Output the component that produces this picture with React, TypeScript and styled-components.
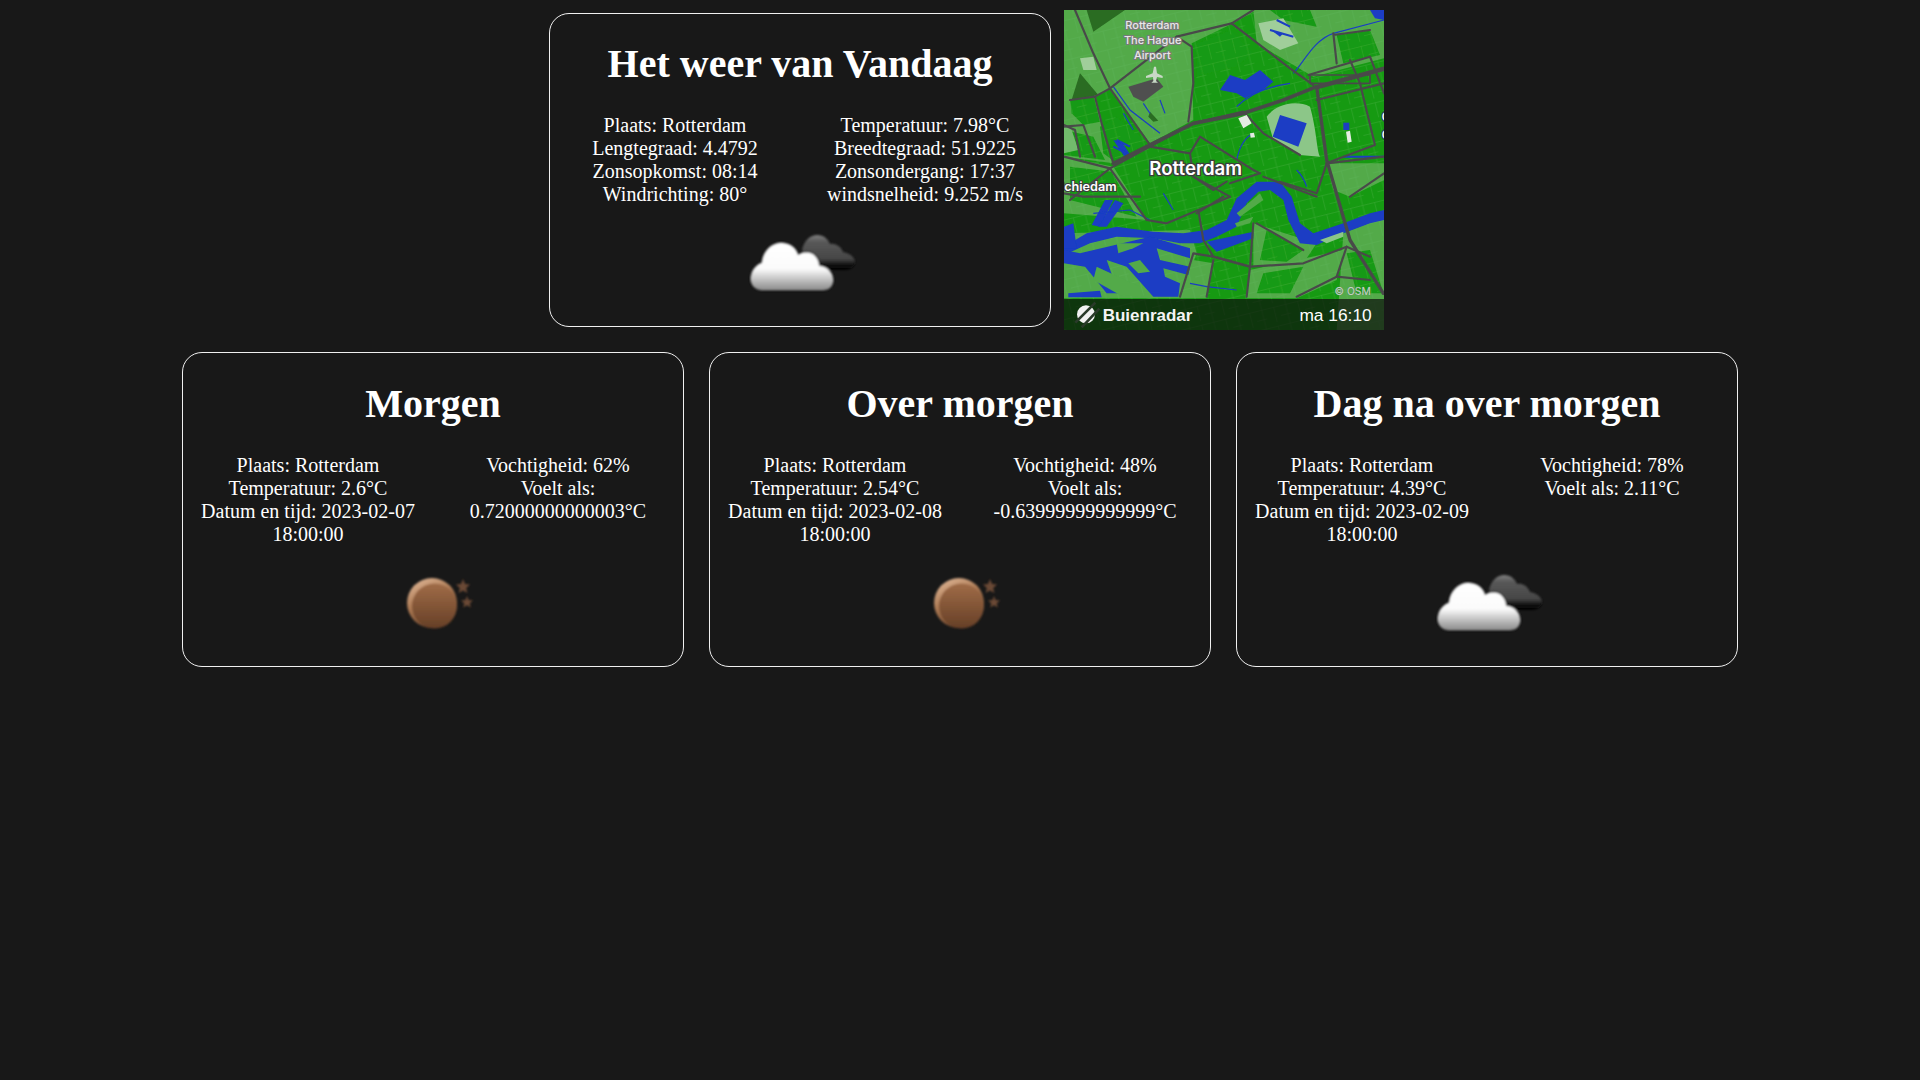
import { FunctionComponent } from 'react';
import styled, { createGlobalStyle } from 'styled-components';

const GlobalStyle = createGlobalStyle`
  html, body {
    margin: 0;
    padding: 0;
    min-height: 100%;
    background-color: #181818;
  }
  body {
    color: #ffffff;
    font-family: "Liberation Serif", "Times New Roman", serif;
    font-size: 20px;
  }
`;

const Row = styled.div`
  display: flex;
  justify-content: center;
  align-items: flex-start;
`;

const ForecastRow = styled(Row)`
  margin-top: -0.2px;
`;

const CardContainer = styled.section`
  box-sizing: border-box;
  width: 502px;
  height: 314.4px;
  margin: 12.6px 12.5px;
  border: 1px solid #f0f0f0;
  border-radius: 20px;
  display: flex;
  flex-direction: column;
  align-items: center;
  text-align: center;
`;

const Title = styled.h1`
  margin: 27.2px 0 27px;
  font-size: 40px;
  line-height: 46px;
  font-weight: 700;
`;

const Columns = styled.div`
  width: 100%;
  height: 92px;
  display: grid;
  grid-template-columns: 1fr 1fr;
`;

const Line = styled.div`
  line-height: 23px;
`;

const IconBox = styled.svg`
  display: block;
  flex: none;
  width: 100px;
  height: 100px;
  overflow: visible;
`;

const MapBox = styled.svg`
  display: block;
  flex: none;
  width: 320px;
  height: 320px;
  margin: 10px 0;
`;

const CLOUD_PATH =
  'M12 84C4 84 0 77 1 71C2 63 8 58 12 57C13 45 22 37 31 37C40 37 46 42 48 49C54 45 62 46 65 50C68 53 69 57 69 60C77 60 83 67 83 74C83 80 79 84 73 84Z';

const CloudIcon: FunctionComponent<{ id: string }> = ({ id }) => (
  <IconBox viewBox="0 0 100 100">
    <defs>
      <linearGradient id={`${id}-w`} x1="0" y1="0" x2="0" y2="1">
        <stop offset="0" stopColor="#ffffff" />
        <stop offset="0.55" stopColor="#fbfbfb" />
        <stop offset="0.85" stopColor="#b0b0b0" />
        <stop offset="1" stopColor="#8c8c8c" />
      </linearGradient>
      <linearGradient id={`${id}-d`} x1="0" y1="0" x2="0" y2="1">
        <stop offset="0" stopColor="#808080" />
        <stop offset="0.2" stopColor="#585858" />
        <stop offset="0.68" stopColor="#464646" />
        <stop offset="0.86" stopColor="#0c0c0c" />
        <stop offset="1" stopColor="#020202" />
      </linearGradient>
      <filter id={`${id}-b`} x="-10%" y="-10%" width="130%" height="120%">
        <feGaussianBlur stdDeviation="1" />
      </filter>
    </defs>
    <g filter={`url(#${id}-b)`}>
      <path
        d="M52 44C54 34 61 29 67 29C74 29 78 33 80 38C86 37 91 41 93 46C99 47 105 51 105 56C105 61 100 64 95 64H62Z"
        fill={`url(#${id}-d)`}
      />
      <path d={CLOUD_PATH} fill="#181818" stroke="#181818" strokeWidth="2" />
      <path d={CLOUD_PATH} fill={`url(#${id}-w)`} />
    </g>
  </IconBox>
);

const MoonIcon: FunctionComponent<{ id: string }> = ({ id }) => (
  <IconBox viewBox="0 0 100 100">
    <defs>
      <linearGradient id={`${id}-m`} x1="0" y1="0" x2="0" y2="1">
        <stop offset="0" stopColor="#a06c48" />
        <stop offset="1" stopColor="#663f26" />
      </linearGradient>
      <linearGradient id={`${id}-r`} x1="0" y1="0" x2="0.5" y2="1">
        <stop offset="0" stopColor="#e8c0a0" />
        <stop offset="0.5" stopColor="#ac7a54" />
        <stop offset="1" stopColor="#6e452a" />
      </linearGradient>
      <filter id={`${id}-b`} x="-10%" y="-10%" width="120%" height="120%">
        <feGaussianBlur stdDeviation="0.8" />
      </filter>
    </defs>
    <g filter={`url(#${id}-b)`}>
      <circle cx="49" cy="57" r="25" fill={`url(#${id}-r)`} />
      <circle cx="51.500" cy="60" r="22.500" fill={`url(#${id}-m)`} />
      <path
        d="M80 33L82 38L87 38.500L83.200 42L84.400 47L80 44.400L75.600 47L76.800 42L73 38.500L78 38Z"
        fill="#6a4834"
      />
      <path
        d="M84 50L85.600 54L90 54.400L86.800 57.300L87.800 61.500L84 59.200L80.200 61.500L81.200 57.300L78 54.400L82.400 54Z"
        fill="#6a4834"
      />
    </g>
  </IconBox>
);

// kaart getekend in de coordinaten van de uitsnede (960 x 960)
const RadarMap: FunctionComponent = () => (
  <MapBox viewBox="42 30 960 960">
    <defs>
      <filter id="map-soft" x="0" y="0" width="100%" height="100%">
        <feGaussianBlur stdDeviation="1.5" />
      </filter>
      <clipPath id="map-clip">
        <rect x="42" y="30" width="960" height="960" />
      </clipPath>
      <pattern id="map-streets" width="74" height="58" patternUnits="userSpaceOnUse" patternTransform="rotate(-14)">
        <path d="M0 13H74M0 42H31M21 0V58M58 13V58" stroke="#6dbd66" strokeWidth="2" fill="none" />
      </pattern>
    </defs>
    <g clipPath="url(#map-clip)">
      <rect x="42" y="30" width="960" height="960" fill="#169a12" />
      <g filter="url(#map-soft)">
        <g fill="#52aa4a">
          <path d="M42 30H620L545 72L425 130L430 360L300 430L180 265L135 290L155 370L190 490L42 470Z" />
          <path d="M42 700L420 690L440 760L390 895H42Z" />
          <path d="M790 30H1002V175L790 230L620 130L610 30Z" />
          <path d="M880 700L1002 650V990H860Z" />
          <path d="M600 810L880 750L860 840L740 895H590Z" />
          <path d="M42 470L190 500L290 660L42 640Z" />
          <path d="M830 490H1002V540L900 590L850 570Z" />
          <path d="M610 670L800 730L760 790L610 800Z" />
          <path d="M430 780L490 790L470 895H390Z" />
        </g>
        <g fill="#169a12">
          <path d="M60 300L130 280L150 365L100 375L65 340Z" />
          <path d="M42 390L130 410L165 480L42 465Z" />
          <path d="M60 500L185 515L260 650L60 600Z" />
          <path d="M860 105L960 90L990 165L880 190Z" />
          <path d="M440 130L540 90L610 160L560 200L440 230Z" />
          <path d="M660 30H780L800 80L700 60Z" />
          <path d="M640 820L760 800L720 880H620Z" />
          <path d="M890 760L960 750L1000 880H920Z" />
          <path d="M650 690L760 750L710 785L630 780Z" />
          <path d="M150 380L200 350L300 430L200 490L160 460Z" />
        </g>
        <rect x="42" y="30" width="960" height="960" fill="url(#map-streets)" opacity="0.35" />
        <path d="M110 30H225L130 95Z" fill="#2a6c20" />
        <path d="M90 220L145 285L65 300Z" fill="#2a6c20" />
        <path d="M300 335L325 362L310 365L295 350Z" fill="#2a6c20" />
        <path d="M650 350C680 310 740 300 780 320C800 390 800 450 810 470L750 465L670 420Z" fill="#8cc688" />
        <path d="M625 70L700 55L745 130L690 150L640 120Z" fill="#a0ce9a" />
        <path d="M42 380L60 375L85 450L42 460Z" fill="#72bb6c" />
        <path d="M90 175L130 170L140 210L100 210Z" fill="#a0ce9a" />
        <g fill="#1a3dc4">
          <path d="M510 270L540 225L585 240L630 210L670 245L640 270L585 295L560 280Z" />
          <path d="M690 345L770 370L745 440L668 410Z" />
          <path d="M880 368H898V390H880Z" />
          <path d="M670 95L700 100L690 110Z" />
          <path d="M960 30H1002V60L975 55Z" />
          <path d="M42 740L110 700L200 680L310 695L400 700L470 690L530 660L560 595L620 545L690 545L725 590L750 670L790 700L880 670L960 640L1002 630V660L960 670L880 700L800 735L750 730L715 660L700 600L660 570L625 575L590 610L560 680L500 710L450 730L390 730L310 715L200 710L120 730L42 765Z" />
          <path d="M42 680L70 670L80 745L42 745Z" />
          <path d="M90 760L300 710L420 745L420 775L320 745L330 780L420 800L415 825L340 805L345 830L390 850L385 890H310L230 800L170 780L205 880H170L130 830L105 800L42 790V750Z" />
          <path d="M165 600L190 600L150 680L125 675Z" />
          <path d="M195 600L220 610L170 680L145 680Z" />
          <path d="M55 880L150 872L155 892H55Z" />
          <path d="M470 725L610 695L610 715L500 755Z" />
          <path d="M190 420L215 425L245 470L230 480Z" />
        </g>
        <g fill="#52aa4a">
          <path d="M560 640L630 580L640 600L570 650Z" />
          <path d="M555 670L610 650L600 670L560 680Z" />
          <path d="M140 800L270 860L280 890L210 885L130 840Z" />
          <path d="M235 790L270 780L300 815L265 820Z" />
          <path d="M200 730L280 730L250 745L205 760Z" />
        </g>
        <path d="M810 720L880 695L880 710L830 730Z" fill="#8cc688" />
        <g fill="none" stroke="#1a3dc4" strokeWidth="3.500">
          <path d="M190 260L240 330L330 400" />
          <path d="M560 480C570 430 590 410 610 400" />
          <path d="M730 220C760 190 790 120 850 100L1002 60" />
          <path d="M340 580L370 630" />
          <path d="M200 420L240 440M190 440L230 460" strokeWidth="6" />
          <path d="M130 640L240 630L300 660" />
          <path d="M420 850L470 860L560 870" />
          <path d="M770 560C760 530 750 520 740 510" />
          <path d="M560 320C600 280 650 260 720 250" />
          <path d="M880 470L1002 470" strokeWidth="6" />
          <path d="M660 90L730 110M680 60L720 80" strokeWidth="6" />
          <path d="M280 310L300 340M330 300L345 340M220 340L250 390" />
        </g>
        <path d="M235 260L320 235L340 260L280 305L250 290Z" fill="#505050" />
        <g fill="none" stroke="#4a4a4a" strokeLinecap="round" strokeLinejoin="round">
          <g strokeWidth="6.500">
            <path d="M75 30L130 160L180 265L300 435" />
            <path d="M180 265L135 290L155 370L190 490" />
            <path d="M180 265L380 110L545 70L610 30" />
            <path d="M380 110L425 140L430 250L415 365" />
            <path d="M545 70L720 205L790 255" />
            <path d="M42 470L180 505L300 440L430 370L580 335L640 400L750 465" />
            <path d="M800 265L1002 210" />
            <path d="M775 225L960 170L1002 280" />
            <path d="M900 180L930 250L975 435L880 470L830 490" />
            <path d="M800 300L1002 250" />
            <path d="M830 490L800 580L690 545" />
            <path d="M420 460L430 530L540 590L445 630L460 720L490 770L600 800L610 670" />
            <path d="M300 440L420 460L450 410L610 510L630 520L540 550" />
            <path d="M42 380L100 375L135 470" />
            <path d="M180 505L290 660L350 670L445 630" />
            <path d="M42 580L100 590L270 590" />
            <path d="M490 770L600 800L760 790L890 740L960 770" />
            <path d="M490 770L430 760L390 890" />
            <path d="M600 800L590 890M890 740L860 830L740 890" />
            <path d="M490 780L470 890" />
            <path d="M860 830L960 840" />
            <path d="M830 490L1002 470" />
            <path d="M900 590L1002 520" />
            <path d="M620 670L760 750" />
            <path d="M430 530L490 570L530 545" />
            <path d="M42 375L75 390L90 470" />
            <path d="M180 505L60 600" />
            <path d="M850 105L960 90M860 190L850 100" />
            <path d="M520 590L440 640M640 530L800 590" />
            <path d="M135 290L60 300" />
          </g>
          <path d="M190 490L300 435L430 370L580 340L700 300L800 260L1002 205" strokeWidth="11" />
          <path d="M800 260L830 480" strokeWidth="10" />
          <path d="M830 480L900 720L1000 880" strokeWidth="10" />
          <path d="M780 225H960V250H780Z" strokeWidth="5" />
        </g>
        <path d="M565 355L590 345L605 370L580 385Z" fill="#e4ece2" />
        <path d="M600 400L612 398L615 412L602 413Z" fill="#e4ece2" />
        <path d="M888 395L900 392L905 425L893 428Z" fill="#e4ece2" />
      </g>
      <path
        d="M312 200L318 200L321 220L338 228V234L321 231L318 243L324 248H304L310 243L309 231L288 234V228L308 220Z"
        fill="#c8d8c6"
      />
      <g
        fontFamily="'Inter', 'Liberation Sans', sans-serif"
        fill="#ffffff"
        stroke="#3c3c3c"
        strokeWidth="6"
        paintOrder="stroke"
        textAnchor="middle"
      >
        <g fontSize="33" fontWeight="500" fill="#e8e8e8" stroke="#7a7a7a">
          <text x="307" y="87">Rotterdam</text>
          <text x="308" y="132">The Hague</text>
          <text x="307" y="177">Airport</text>
        </g>
        <text x="437" y="526" fontSize="56" fontWeight="600" strokeWidth="8">Rotterdam</text>
        <text x="200" y="573" fontSize="38" fontWeight="600" textAnchor="end">Schiedam</text>
        <text x="1008" y="362" fontSize="34" fontWeight="600">C</text>
        <text x="1008" y="418" fontSize="34" fontWeight="600">C</text>
        <text x="908" y="884" fontSize="31" fill="#c4d4c4" stroke="#5c8c5c" strokeWidth="2">© OSM</text>
      </g>
      <rect x="42" y="897" width="960" height="93" fill="#0c0c0c" fillOpacity="0.7" />
      <circle cx="108" cy="943" r="27" fill="#f2f2f2" />
      <path d="M76 968L136 908M95 982L148 926" stroke="#2a3a2a" strokeWidth="8" />
      <text
        x="158"
        y="963"
        fontFamily="'Liberation Sans', sans-serif"
        fontSize="51"
        fontWeight="700"
        fill="#f4f4f4"
      >
        Buienradar
      </text>
      <text
        x="965"
        y="963"
        fontFamily="'Liberation Sans', sans-serif"
        fontSize="52"
        fill="#ffffff"
        textAnchor="end"
      >
        ma 16:10
      </text>
    </g>
  </MapBox>
);

interface ICard {
  title: string;
  left: string[];
  right: string[];
  icon: 'cloud' | 'moon';
  id: string;
}

const Card: FunctionComponent<ICard> = ({ title, left, right, icon, id }) => (
  <CardContainer>
    <Title>{title}</Title>
    <Columns>
      <div>
        {left.map(text => (
          <Line key={text}>{text}</Line>
        ))}
      </div>
      <div>
        {right.map(text => (
          <Line key={text}>{text}</Line>
        ))}
      </div>
    </Columns>
    {icon === 'cloud' ? <CloudIcon id={id} /> : <MoonIcon id={id} />}
  </CardContainer>
);

const App: FunctionComponent = () => (
  <>
    <GlobalStyle />
    <Row>
      <Card
        id="vandaag"
        title="Het weer van Vandaag"
        left={['Plaats: Rotterdam', 'Lengtegraad: 4.4792', 'Zonsopkomst: 08:14', 'Windrichting: 80°']}
        right={['Temperatuur: 7.98°C', 'Breedtegraad: 51.9225', 'Zonsondergang: 17:37', 'windsnelheid: 9.252 m/s']}
        icon="cloud"
      />
      <RadarMap />
    </Row>
    <ForecastRow>
      <Card
        id="morgen"
        title="Morgen"
        left={['Plaats: Rotterdam', 'Temperatuur: 2.6°C', 'Datum en tijd: 2023-02-07 18:00:00']}
        right={['Vochtigheid: 62%', 'Voelt als: 0.72000000000003°C']}
        icon="moon"
      />
      <Card
        id="overmorgen"
        title="Over morgen"
        left={['Plaats: Rotterdam', 'Temperatuur: 2.54°C', 'Datum en tijd: 2023-02-08 18:00:00']}
        right={['Vochtigheid: 48%', 'Voelt als: -0.63999999999999°C']}
        icon="moon"
      />
      <Card
        id="dagna"
        title="Dag na over morgen"
        left={['Plaats: Rotterdam', 'Temperatuur: 4.39°C', 'Datum en tijd: 2023-02-09 18:00:00']}
        right={['Vochtigheid: 78%', 'Voelt als: 2.11°C']}
        icon="cloud"
      />
    </ForecastRow>
  </>
);

export default App;
